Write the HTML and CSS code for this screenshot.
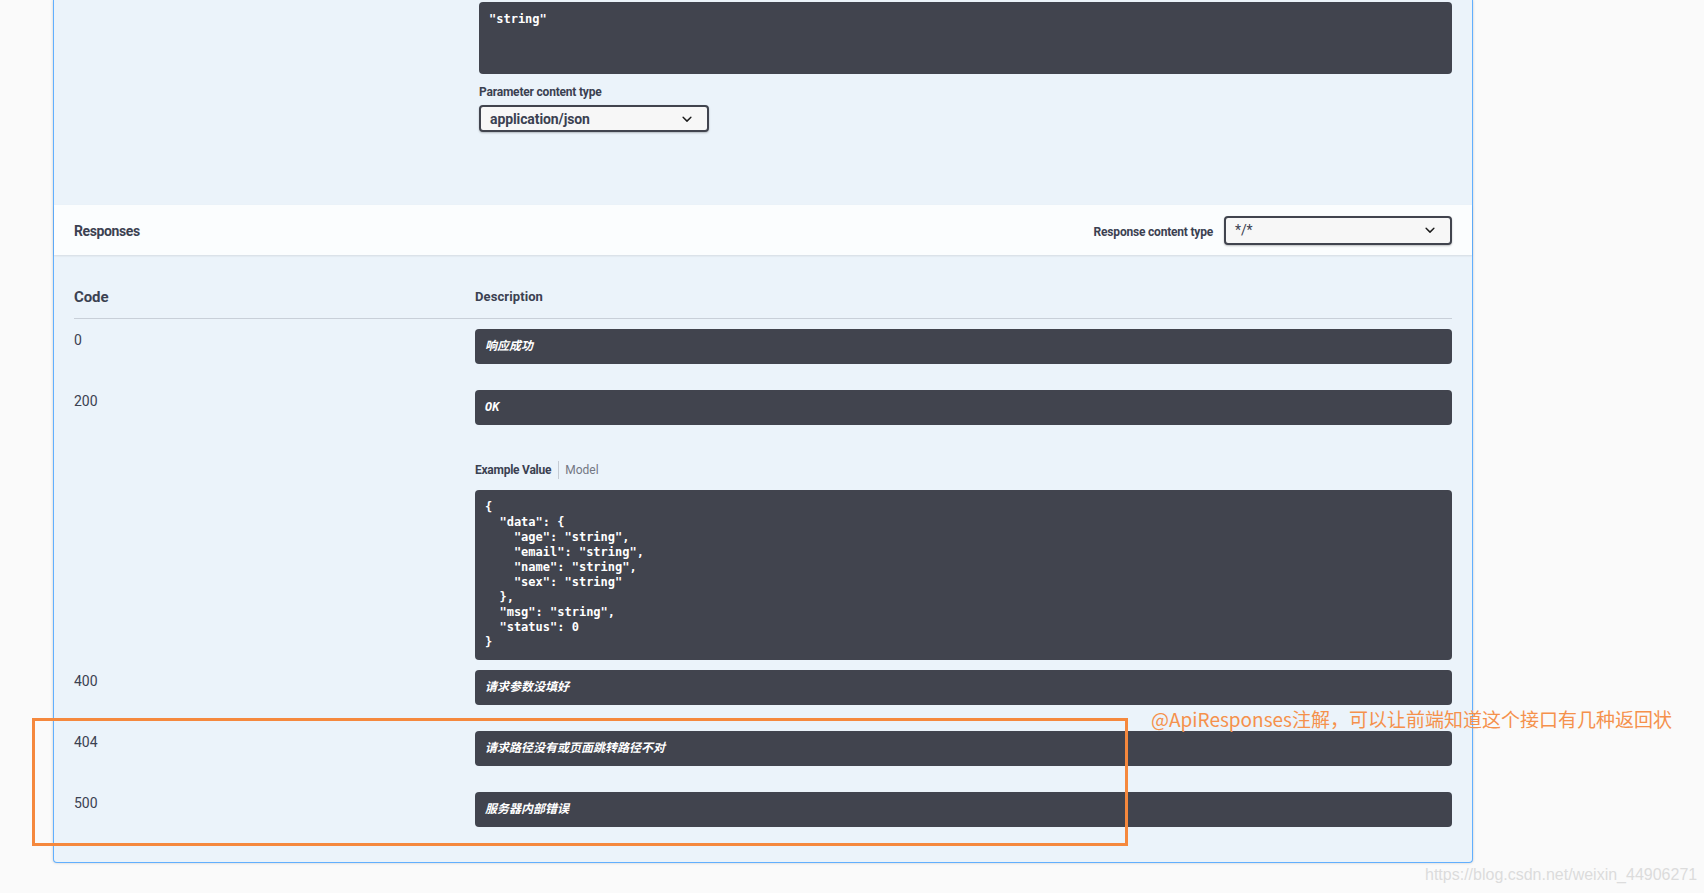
FILE: index.html
```html
<!DOCTYPE html>
<html lang="zh-CN">
<head>
<meta charset="utf-8">
<title>Swagger UI</title>
<link rel="stylesheet" href="styles.css">
</head>
<body>
<div class="opblock">
  <div class="params">
    <div class="param-name"></div>
    <div class="param-desc">
      <div class="body-example">"string"</div>
      <div class="ct-label">Parameter content type</div>
      <div class="select sel-param">
        <span class="sel-text">application/json</span>
        <svg class="chev" viewBox="0 0 20 20" width="20" height="20"><path d="M13.418 7.859a.695.695 0 01.978 0 .68.68 0 010 .969l-3.908 3.830a.697.697 0 01-.979 0l-3.908-3.830a.68.68 0 010-.969.695.695 0 01.978 0L10 11l3.418-3.141z"/></svg>
      </div>
    </div>
  </div>

  <div class="section-header">
    <h4 class="sh-title">Responses</h4>
    <div class="rct">
      <span class="rct-label">Response content type</span>
      <div class="select sel-resp">
        <span class="sel-text">*/*</span>
        <svg class="chev" viewBox="0 0 20 20" width="20" height="20"><path d="M13.418 7.859a.695.695 0 01.978 0 .68.68 0 010 .969l-3.908 3.830a.697.697 0 01-.979 0l-3.908-3.830a.68.68 0 010-.969.695.695 0 01.978 0L10 11l3.418-3.141z"/></svg>
      </div>
    </div>
  </div>

  <div class="responses">
    <div class="rhead">
      <div class="h-code">Code</div>
      <div class="h-desc">Description</div>
    </div>

    <div class="rrow">
      <div class="c-code">0</div>
      <div class="c-desc"><div class="md">响应成功</div></div>
    </div>

    <div class="rrow">
      <div class="c-code">200</div>
      <div class="c-desc">
        <div class="md">OK</div>
        <ul class="tabs">
          <li class="tab tab-active">Example Value</li>
          <li class="tab">Model</li>
        </ul>
        <pre class="code">{
  "data": {
    "age": "string",
    "email": "string",
    "name": "string",
    "sex": "string"
  },
  "msg": "string",
  "status": 0
}</pre>
      </div>
    </div>

    <div class="rrow">
      <div class="c-code">400</div>
      <div class="c-desc"><div class="md">请求参数没填好</div></div>
    </div>

    <div class="rrow">
      <div class="c-code">404</div>
      <div class="c-desc"><div class="md">请求路径没有或页面跳转路径不对</div></div>
    </div>

    <div class="rrow">
      <div class="c-code">500</div>
      <div class="c-desc"><div class="md">服务器内部错误</div></div>
    </div>
  </div>
</div>

<div class="anno-box"></div>
<div class="anno-text">@ApiResponses注解，可以让前端知道这个接口有几种返回状</div>
<div class="watermark">https://blog.csdn.net/weixin_44906271</div>
</body>
</html>
```

FILE: styles.css
```css
* { box-sizing: border-box; }

html, body {
  margin: 0;
  padding: 0;
}

body {
  background: #fafafa;
  font-family: Roboto, "Noto Sans CJK SC", sans-serif;
  color: #3b4151;
  position: relative;
  height: 893px;
  overflow: hidden;
}

.opblock {
  margin-left: 53px;
  width: 1420px;
  background: #ebf3fa;
  border: 1px solid #61affe;
  border-top: none;
  border-radius: 0 0 4px 4px;
  box-shadow: 0 0 3px rgba(0, 0, 0, 0.19);
}

/* parameters area */
.params {
  display: grid;
  grid-template-columns: 405px 1fr;
  padding: 2px 20px 73px;
}

.body-example {
  height: 72px;
  background: #41444e;
  border-radius: 4px;
  color: #fff;
  font-family: "DejaVu Sans Mono", monospace;
  font-weight: 700;
  font-size: 12px;
  line-height: 15px;
  padding: 10px;
}

.ct-label {
  margin-top: 10px;
  font-size: 12px;
  font-weight: 700;
  line-height: 16px;
  letter-spacing: -0.2px;
}

.select {
  display: flex;
  align-items: center;
  justify-content: space-between;
  border: 2px solid #41444e;
  border-radius: 4px;
  background: #f7f7f7;
  box-shadow: 0 1px 2px 0 rgba(0, 0, 0, 0.25);
  padding: 0 10px 0 9px;
  font-size: 14px;
  font-weight: 700;
  color: #3b4151;
}

.sel-text {
  letter-spacing: -0.1px;
}

.chev {
  display: block;
  fill: #1b1b1b;
}

.sel-param {
  margin-top: 5px;
  width: 230px;
  height: 27px;
}

.sel-resp {
  width: 228px;
  height: 29px;
}

.sel-resp .sel-text {
  font-weight: 400;
}

/* responses header band */
.section-header {
  display: flex;
  align-items: center;
  justify-content: space-between;
  height: 50px;
  padding: 0 20px;
  background: rgba(255, 255, 255, 0.8);
  box-shadow: 0 1px 2px rgba(0, 0, 0, 0.1);
}

.sh-title {
  margin: 2px 0 0;
  font-size: 14px;
  font-weight: 700;
  letter-spacing: -0.4px;
}

.rct {
  display: flex;
  align-items: center;
  gap: 11px;
}

.rct-label {
  font-size: 12px;
  font-weight: 700;
  letter-spacing: -0.2px;
  margin-top: 3px;
}

/* responses table */
.responses {
  padding: 20px 20px 19px;
}

.rhead {
  display: grid;
  grid-template-columns: 401px 1fr;
  padding: 12px 0 11px;
  border-bottom: 1px solid rgba(59, 65, 81, 0.2);
  line-height: 20px;
  font-weight: 700;
}

.h-code {
  font-size: 15px;
  letter-spacing: -0.1px;
}

.h-desc {
  font-size: 13px;
  letter-spacing: 0.1px;
}

.rrow {
  display: grid;
  grid-template-columns: 401px 1fr;
  padding-top: 10px;
}

.c-code {
  font-size: 14px;
  line-height: 22px;
}

.c-desc {
  display: flex;
  flex-direction: column;
}

.md {
  margin-bottom: 16px;
  padding: 10px;
  border-radius: 4px;
  background: #41444e;
  color: #fff;
  font-family: "DejaVu Sans Mono", "Noto Sans CJK SC", monospace;
  font-size: 12px;
  font-style: italic;
  font-weight: 700;
  line-height: 15px;
}

.tabs {
  display: flex;
  list-style: none;
  margin: 20px 0 11px;
  padding: 0;
  height: 18px;
  font-size: 12px;
  line-height: 18px;
}

.tab {
  color: #737783;
}

.tab-active {
  color: #3b4151;
  font-weight: 700;
  letter-spacing: -0.25px;
  padding-right: 7px;
  margin-right: 6px;
  border-right: 1px solid #c5cbd3;
}

.code {
  margin: 0;
  height: 170px;
  padding: 10px;
  border-radius: 4px;
  background: #41444e;
  color: #fff;
  font-family: "DejaVu Sans Mono", monospace;
  font-size: 12px;
  font-weight: 700;
  line-height: 15px;
  white-space: pre;
}

/* screenshot annotation overlay */
.anno-box {
  position: absolute;
  left: 32px;
  top: 718px;
  width: 1096px;
  height: 128px;
  border: 3px solid #f5883d;
}

.anno-text {
  position: absolute;
  left: 1151px;
  top: 709px;
  font-family: "Noto Sans CJK SC", sans-serif;
  font-size: 19px;
  line-height: 19px;
  color: #f5914c;
  white-space: nowrap;
}

.watermark {
  position: absolute;
  left: 1425px;
  top: 867px;
  font-family: "Liberation Sans", Arial, sans-serif;
  font-size: 16px;
  line-height: 16px;
  color: #dcdcdc;
  white-space: nowrap;
}
```
